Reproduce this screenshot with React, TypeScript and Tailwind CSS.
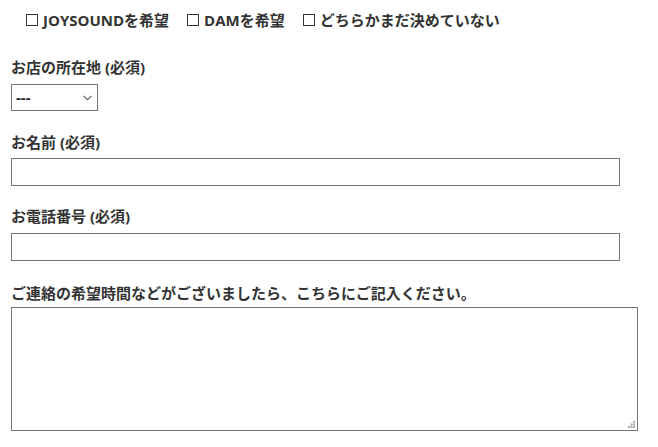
import { FC } from 'react';

const font = { fontFamily: '"Open Sans", "Noto Sans CJK JP", sans-serif' };

const Label: FC<{ text: string; className?: string }> = ({ text, className = '' }) => (
  <div className={`text-[15px] leading-[22px] font-bold text-[#333] ${className}`}>{text}</div>
);

const App: FC = () => {
  const choices = ['JOYSOUNDを希望', 'DAMを希望', 'どちらかまだ決めていない'];

  return (
    <div className="w-[658px] h-[447px] bg-white overflow-hidden" style={font}>
      <div className="px-[11px] pt-[9px]">
        {/* 機種の希望 */}
        <div className="flex gap-[18px] pl-[15px] text-[15px] leading-[22px] font-bold text-[#333]">
          {choices.map((c) => (
            <label key={c} className="flex items-center">
              <span className="inline-block w-[12px] h-[12px] border border-[#333] mr-[5px]" />
              {c}
            </label>
          ))}
        </div>

        {/* 所在地 */}
        <Label text="お店の所在地 (必須)" className="mt-[25px] mb-[6px]" />
        <div className="relative w-[87px] h-[27px]">
          <select className="appearance-none w-full h-full border border-[#767676] bg-white pl-[4px] text-[15px] font-bold text-[#222] outline-none">
            <option>---</option>
          </select>
          <svg className="absolute right-[6px] top-[11px] pointer-events-none" width="9" height="6" viewBox="0 0 9 6">
            <path d="M0.5 0.8 L4.5 4.8 L8.5 0.8" fill="none" stroke="#555" strokeWidth="1.1" />
          </svg>
        </div>

        {/* お名前 */}
        <Label text="お名前 (必須)" className="mt-[20px] mb-[5px]" />
        <input type="text" className="block w-[609px] h-[28px] border border-[#767676] bg-white outline-none" />

        {/* 電話番号 */}
        <Label text="お電話番号 (必須)" className="mt-[19px] mb-[6px]" />
        <input type="tel" className="block w-[609px] h-[28px] border border-[#767676] bg-white outline-none" />

        {/* 備考 */}
        <Label text="ご連絡の希望時間などがございましたら、こちらにご記入ください。" className="mt-[21px] mb-[3px]" />
        <div className="relative w-[627px] h-[124px]">
          <textarea className="block w-full h-full resize-none border border-[#767676] bg-white outline-none" />
          <svg className="absolute right-[3px] bottom-[3px] pointer-events-none" width="7" height="7" viewBox="0 0 7 7">
            <rect x="5" y="0" width="2" height="2" fill="#aaa" />
            <rect x="2.5" y="2.5" width="2" height="2" fill="#aaa" />
            <rect x="5" y="2.5" width="2" height="2" fill="#aaa" />
            <rect x="0" y="5" width="2" height="2" fill="#aaa" />
            <rect x="2.5" y="5" width="2" height="2" fill="#aaa" />
            <rect x="5" y="5" width="2" height="2" fill="#aaa" />
          </svg>
        </div>
      </div>
    </div>
  );
};

export default App;
